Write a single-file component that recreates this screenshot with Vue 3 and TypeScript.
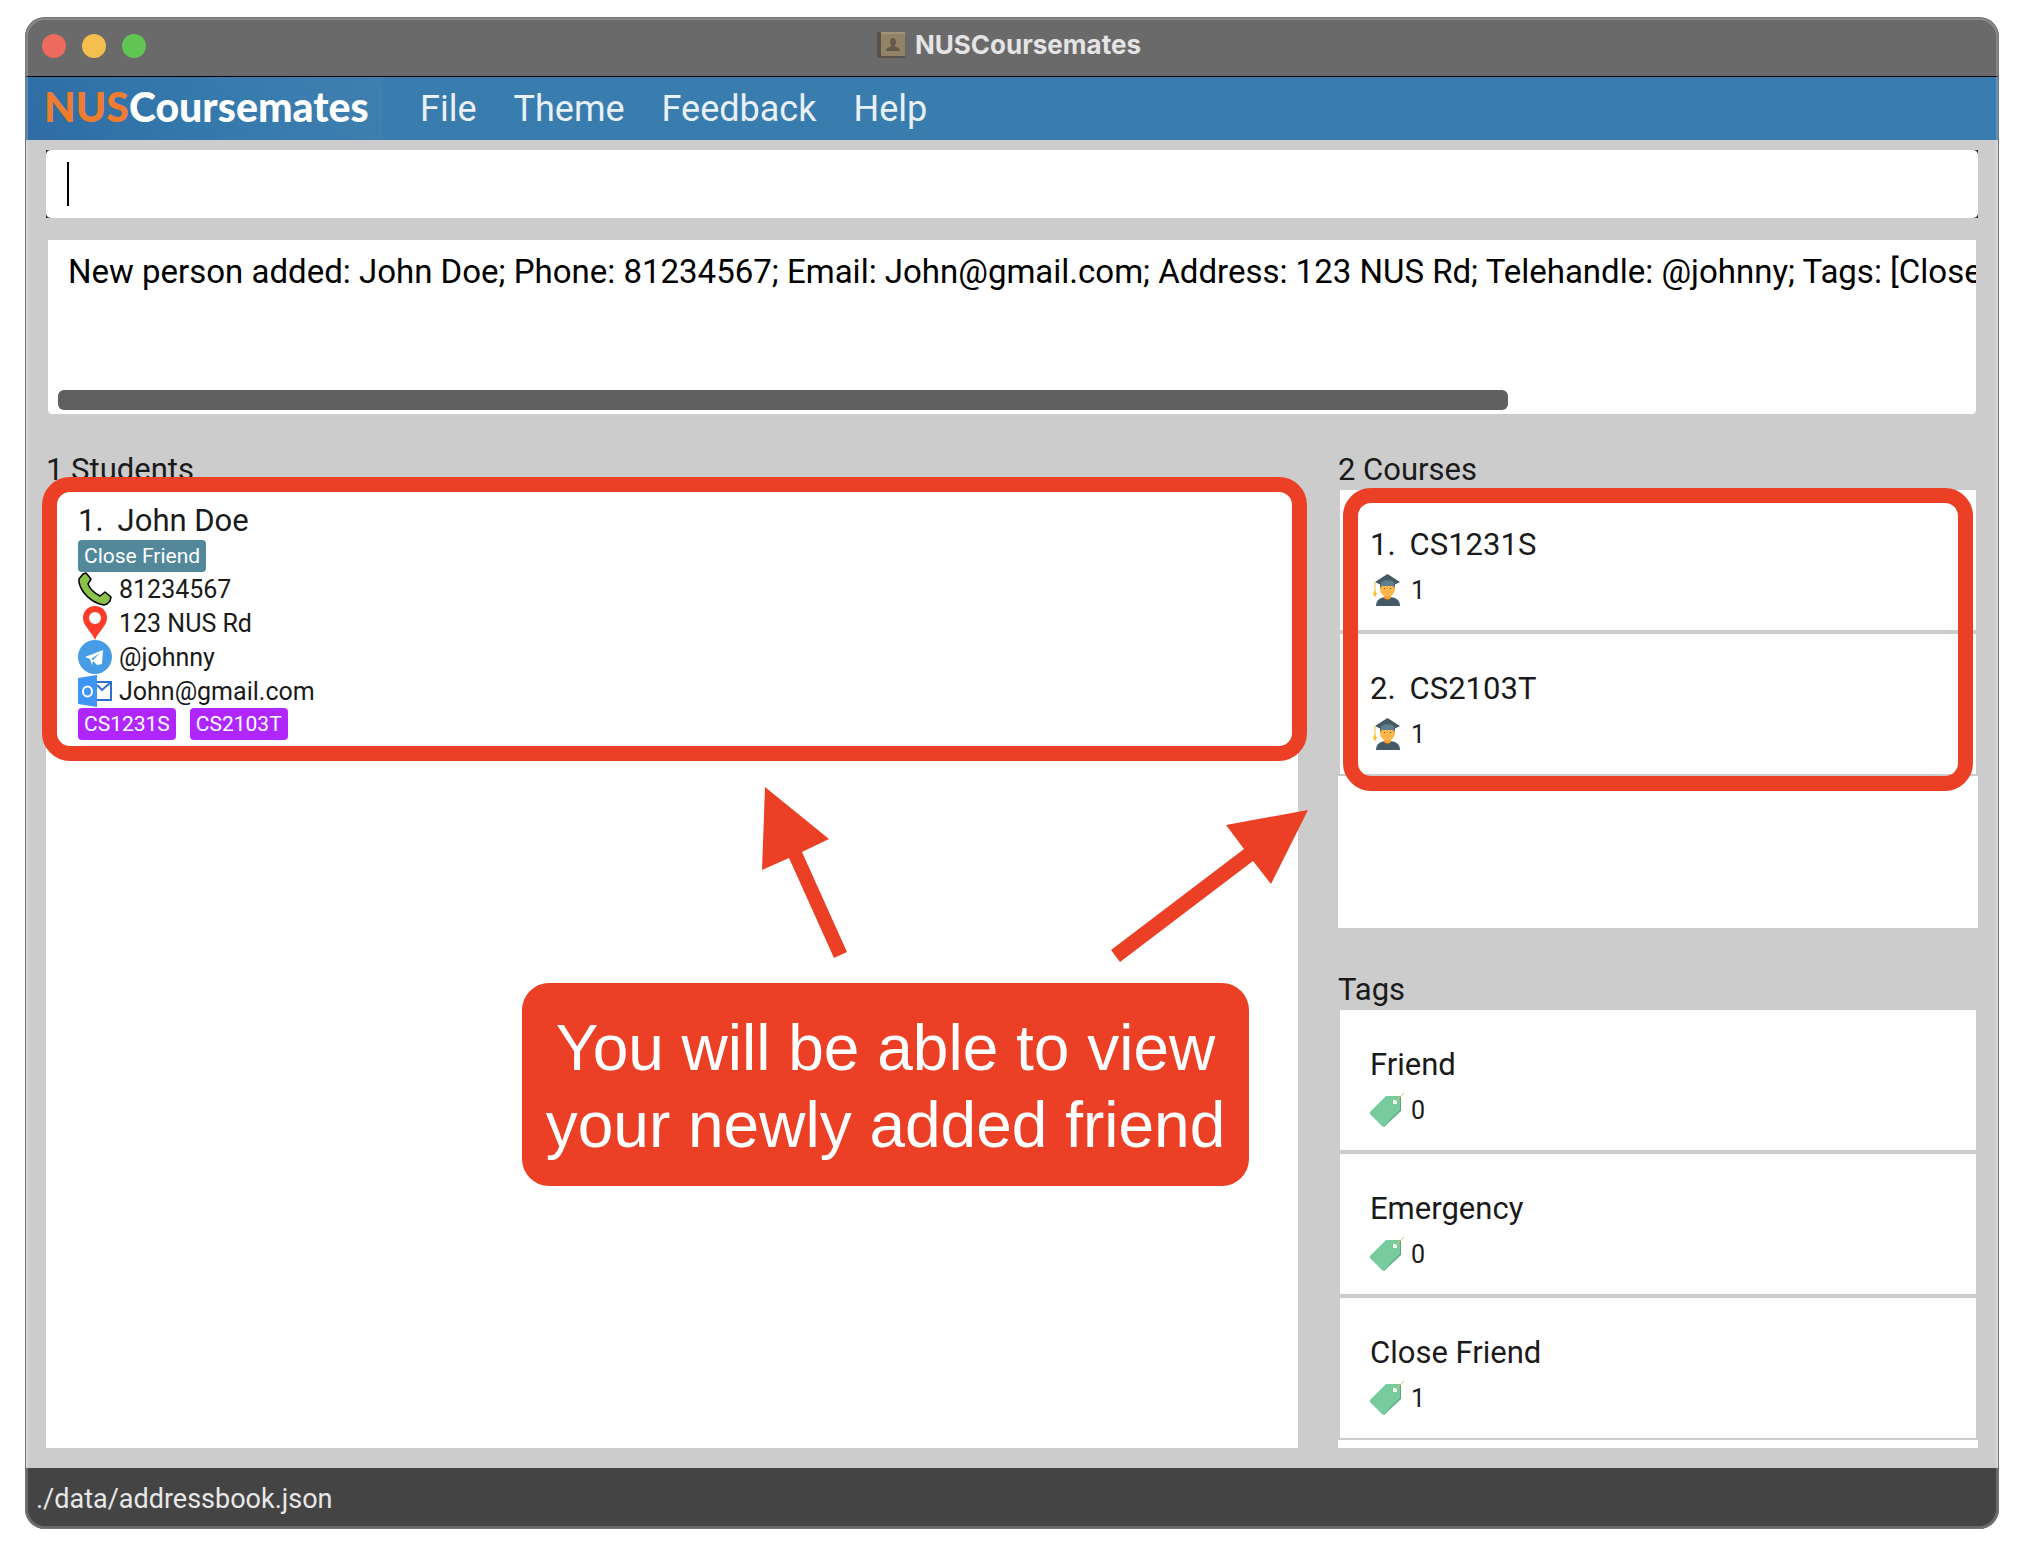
<script setup lang="ts">
import { ref } from 'vue'

interface Entry {
  name: string
  count: number
}

const command = ref('')
const menus: string[] = ['File', 'Theme', 'Feedback', 'Help']
const result =
  'New person added: John Doe; Phone: 81234567; Email: John@gmail.com; Address: 123 NUS Rd; Telehandle: @johnny; Tags: [Close'
const courses: Entry[] = [
  { name: 'CS1231S', count: 1 },
  { name: 'CS2103T', count: 1 },
]
const tags: Entry[] = [
  { name: 'Friend', count: 0 },
  { name: 'Emergency', count: 0 },
  { name: 'Close Friend', count: 1 },
]
</script>

<template>
  <div class="window">
    <header class="titlebar">
      <div class="lights">
        <button class="light red" aria-label="Close"></button>
        <button class="light amber" aria-label="Minimise"></button>
        <button class="light green" aria-label="Zoom"></button>
      </div>
      <div class="title">
        <svg class="book" viewBox="0 0 28 28" aria-hidden="true">
          <rect x="0" y="1" width="28" height="26" rx="2" fill="#58504a" />
          <rect x="4" y="2" width="24" height="23" rx="1" fill="#938266" />
          <rect x="4" y="1" width="24" height="2" fill="#a0937c" />
          <path d="M16 7c2 0 3 2 3 4s-1 2-1 4c0 1 5 1 5 5H9c0-4 5-4 5-5 0-2-1-2-1-4s1-4 3-4z" fill="#655a4a" />
        </svg>
        <span>NUSCoursemates</span>
      </div>
    </header>

    <nav class="menubar">
      <div class="logo"><span class="nus">NUS</span><span>Coursemates</span></div>
      <button v-for="menu in menus" :key="menu" class="menu">{{ menu }}</button>
    </nav>

    <main class="body">
      <div class="command">
        <input v-model="command" class="command-input" type="text" aria-label="Command" />
        <span class="caret"></span>
      </div>

      <section class="result">
        <p class="result-text">{{ result }}</p>
        <div class="scroll-thumb"></div>
      </section>

      <div class="columns">
        <section class="students">
          <h2 class="heading">1 Students</h2>
          <div class="panel student-panel">
            <article class="student">
              <h3 class="name"><span>1.</span><span>John Doe</span></h3>
              <div class="chips"><span class="chip tag">Close Friend</span></div>
              <p class="field">
                <svg viewBox="0 0 34 34" aria-hidden="true">
                  <path d="M1 7 5 2 8 1 13 7 10 12C12 17 16 21 22 24L27 20 33 25 32 29 29 32 26 33C14 31 3 21 1 10Z" fill="#8bc34a" stroke="#000" stroke-width="1.5" stroke-linejoin="round" />
                </svg>
                <span>81234567</span>
              </p>
              <p class="field">
                <svg viewBox="0 0 34 34" aria-hidden="true">
                  <path d="M17 0C10 0 5 5 5 12c0 8 9 14 12 22 3-8 12-14 12-22C29 5 24 0 17 0z" fill="#fe3a2b" />
                  <circle cx="17" cy="12" r="6" fill="#fff" />
                </svg>
                <span>123 NUS Rd</span>
              </p>
              <p class="field">
                <svg viewBox="0 0 34 34" aria-hidden="true">
                  <circle cx="17" cy="17" r="17" fill="#469de6" />
                  <path d="M7 17 25 10 24 24 19 25 15 21 14 25 12 19zM13 19 15 20 22 13z" fill="#fff" fill-rule="evenodd" />
                </svg>
                <span>@johnny</span>
              </p>
              <p class="field">
                <svg viewBox="0 0 34 34" aria-hidden="true">
                  <path d="M18 8H33V26H18M19 11l5 5 8-7" fill="none" stroke="#2f70cf" stroke-width="2" />
                  <path d="M0 4 19 1V33L0 30z" fill="#4094f4" />
                  <ellipse cx="9.500" cy="17.500" rx="4.500" ry="5" fill="none" stroke="#fff" stroke-width="2" />
                </svg>
                <span>John@gmail.com</span>
              </p>
              <div class="chips">
                <span v-for="course in courses" :key="course.name" class="chip course">{{ course.name }}</span>
              </div>
            </article>
            <div class="frame student-frame"></div>
            <svg class="arrows" viewBox="0 0 560 180" aria-hidden="true">
              <path d="M5 7 69 59 42 72 87 172 74 178 29 78 2 90z" />
              <path d="M548 30 466 45 484 69 351 170 360 182 493 81 511 104z" />
            </svg>
            <div class="callout">You will be able to view<br />your newly added friend</div>
          </div>
        </section>

        <aside class="side">
          <section class="courses">
            <h2 class="heading">2 Courses</h2>
            <div class="panel course-panel">
              <ul class="list">
                <li v-for="(course, i) in courses" :key="course.name" class="item">
                  <h3 class="name"><span>{{ i + 1 }}.</span><span>{{ course.name }}</span></h3>
                  <p class="count">
                    <svg viewBox="0 0 34 34" aria-hidden="true">
                      <path d="M6 33c0-6 4-9 12-9s12 3 12 9z" fill="#455a64" />
                      <path d="M14 20h7v5q-3.500 3-7 0z" fill="#ff9833" />
                      <path d="M10 12h15v5c-1 4-4 7-7.500 7S11 21 10 17z" fill="#ffb74d" />
                      <path d="M10 10h15v5l-2-2H12l-2 2z" fill="#546e7a" />
                      <path d="M17.500 1 30 9 24 12H11L5 9z" fill="#455a64" />
                      <path d="M11 9q6.500-4 13 0v4H11z" fill="#607d8b" />
                      <path d="M5 9v11" stroke="#f5c034" stroke-width="1" />
                      <path d="M5 17l2 4-2 3-2-3z" fill="#fbc02d" />
                      <path d="M14 15h1v1h-1zM20 15h1v1h-1z" fill="#784719" />
                    </svg>
                    <span>{{ course.count }}</span>
                  </p>
                </li>
              </ul>
              <div class="frame course-frame"></div>
            </div>
          </section>

          <section class="tags">
            <h2 class="heading">Tags</h2>
            <div class="panel tag-panel">
              <ul class="list">
                <li v-for="tag in tags" :key="tag.name" class="item">
                  <h3 class="name">{{ tag.name }}</h3>
                  <p class="count">
                    <svg viewBox="0 0 34 34" aria-hidden="true">
                      <path d="M17 3H31V18L14 34 12 33 29 17z" fill="#5fa67c" />
                      <path d="M16 3H30V17L13 34 0 21V19z" fill="#78cb9c" />
                      <rect x="23" y="7" width="4" height="4" rx="1" fill="#fff" />
                      <path d="M25 9 34 0" stroke="#e2b862" stroke-width="1" />
                    </svg>
                    <span>{{ tag.count }}</span>
                  </p>
                </li>
              </ul>
            </div>
          </section>
        </aside>
      </div>
    </main>

    <footer class="status">./data/addressbook.json</footer>
  </div>
</template>

<style>
body {
  margin: 0;
  background: #fff;
}
</style>

<style scoped>
* {
  box-sizing: border-box;
}
h2,
h3,
p,
ul {
  margin: 0;
  padding: 0;
  font-weight: 400;
}
button {
  border: 0;
  padding: 0;
  background: none;
  font: inherit;
}
.window {
  position: relative;
  margin: 17px 25px 29px;
  min-height: calc(100vh - 46px);
  display: flex;
  flex-direction: column;
  border-radius: 20px;
  overflow: hidden;
  background: #ccc;
  color: #1a1a1a;
  font-family: Roboto, 'Liberation Sans', sans-serif;
  font-size: 31px;
}
.window::after {
  content: '';
  position: absolute;
  inset: 0;
  border-radius: 20px;
  box-shadow: inset 0 0 0 1px #777, inset 0 0 0 3px rgba(255, 255, 255, 0.2);
  pointer-events: none;
}
.titlebar {
  position: relative;
  display: flex;
  align-items: center;
  justify-content: center;
  height: 60px;
  padding-bottom: 3px;
  background: #6a6a6a;
  border-bottom: 1px solid #000;
}
.lights {
  position: absolute;
  left: 17px;
  top: 17px;
  display: flex;
  gap: 16px;
}
.light {
  width: 24px;
  height: 24px;
  border-radius: 50%;
}
.red { background: #ec6a5e; }
.amber { background: #f4bf4f; }
.green { background: #61c554; }
.title {
  display: flex;
  align-items: center;
  gap: 10px;
  margin-right: 6px;
  color: #e4e4e4;
  font-family: Inter, sans-serif;
  font-size: 26px;
  font-weight: 700;
  line-height: 32px;
}
.book {
  width: 28px;
  height: 28px;
}
.menubar {
  display: flex;
  height: 63px;
  background: #397cae;
}
.logo {
  width: 358px;
  padding-left: 19px;
  background: linear-gradient(60deg, #2f6ca4, #3478ab 45%, #4080b0);
  color: #fff;
  font-family: Lato, sans-serif;
  font-size: 41px;
  font-weight: 900;
  line-height: 60px;
  white-space: nowrap;
}
.nus {
  color: #f07d2f;
}
.menu {
  margin-left: 37px;
  padding-top: 2px;
  color: #e9f0f6;
  font-size: 36px;
  line-height: 61px;
}
.body {
  flex: 1;
  display: flex;
  flex-direction: column;
  padding: 10px 21px 20px;
}
.command {
  position: relative;
  height: 68px;
  background: #333;
}
.command-input {
  display: block;
  width: 100%;
  height: 100%;
  padding: 0 22px;
  border: 0;
  border-radius: 5px;
  background: #fff;
  font: inherit;
  outline: none;
}
.caret {
  position: absolute;
  left: 21px;
  top: 12px;
  width: 2px;
  height: 44px;
  background: #000;
}
.result {
  display: flex;
  flex-direction: column;
  justify-content: space-between;
  height: 174px;
  margin: 22px 2px 0;
  padding: 12px 0 4px;
  border-radius: 0 0 4px 4px;
  background: #fff;
  color: #000;
  overflow: hidden;
}
.result-text {
  padding-left: 20px;
  font-size: 33px;
  line-height: 40px;
  white-space: nowrap;
}
.scroll-thumb {
  width: 75.200%;
  height: 20px;
  margin-left: 10px;
  border-radius: 6px;
  background: #606060;
}
.columns {
  flex: 1;
  display: flex;
  gap: 40px;
  padding-top: 36px;
}
.students {
  flex: 1;
  display: flex;
  flex-direction: column;
}
.heading {
  height: 40px;
  font-size: 31px;
  line-height: 40px;
}
.panel {
  position: relative;
  background: #fff;
}
.student-panel {
  flex: 1;
}
.student {
  padding: 10px 32px;
}
.name {
  display: flex;
  gap: 14px;
  height: 40px;
  font-size: 31px;
  line-height: 42px;
}
.chips {
  display: flex;
  gap: 14px;
}
.chip {
  padding: 1px 6px 0;
  border-radius: 4px;
  color: #fff;
  font-size: 21px;
  line-height: 31px;
}
.tag {
  background: #53889b;
}
.course {
  background: #b026ff;
}
.field {
  display: flex;
  gap: 7px;
  height: 34px;
  font-size: 25px;
  line-height: 36px;
}
.field svg {
  width: 34px;
  height: 34px;
}
.frame {
  position: absolute;
  border: 15px solid #eb4026;
  border-radius: 28px;
  pointer-events: none;
}
.student-frame {
  inset: -13px -9px auto -4px;
  height: 284px;
}
.arrows {
  position: absolute;
  left: 714px;
  top: 290px;
  width: 560px;
  height: 180px;
  overflow: visible;
  fill: #eb4026;
}
.callout {
  position: absolute;
  left: 476px;
  top: 493px;
  width: 727px;
  padding: 27px 0 22px;
  border-radius: 27px;
  background: #eb4026;
  color: #fff;
  font-family: 'Liberation Sans', Arial, sans-serif;
  font-size: 64px;
  line-height: 77px;
  text-align: center;
  white-space: nowrap;
}
.side {
  width: 640px;
  display: flex;
  flex-direction: column;
  gap: 42px;
}
.course-panel {
  height: 438px;
}
.tag-panel {
  padding-bottom: 8px;
}
.list {
  display: flex;
  flex-direction: column;
  gap: 4px;
  padding: 0 2px 2px;
  background: #ccc;
  list-style: none;
}
.item {
  height: 140px;
  padding: 34px 30px;
  background: #fff;
}
.count {
  display: flex;
  gap: 7px;
  height: 34px;
  margin-top: 9px;
  font-size: 25px;
  line-height: 36px;
}
.count svg {
  width: 34px;
  height: 34px;
}
.course-frame {
  inset: -2px 5px auto 5px;
  height: 303px;
}
.status {
  height: 61px;
  padding-left: 11px;
  background: #444;
  color: #e8e8e8;
  font-size: 27px;
  line-height: 62px;
}
</style>
